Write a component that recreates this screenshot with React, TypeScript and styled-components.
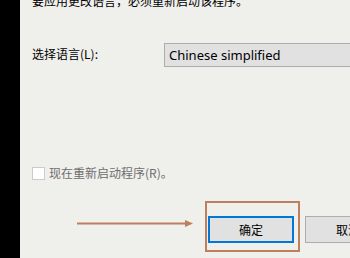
import styled, { createGlobalStyle } from "styled-components";

const GlobalStyle = createGlobalStyle`
  html, body {
    margin: 0;
    padding: 0;
    background: #efefec;
  }
`;

const CJK = `"Noto Sans CJK SC", "Noto Sans", sans-serif`;

function App() {
  return (
    <>
      <GlobalStyle />
      <Screen>
        <EdgeStrip />
        <Dialog>
          <Message>要应用更改语言，必须重新启动该程序。</Message>
          <LanguageRow>
            <FieldLabel>选择语言(L):</FieldLabel>
            <Dropdown>Chinese simplified</Dropdown>
          </LanguageRow>
          <RestartRow>
            <CheckBox />
            <DisabledText>现在重新启动程序(R)。</DisabledText>
          </RestartRow>
          <ButtonRow>
            <Arrow width="116" height="51" viewBox="0 0 116 51" aria-hidden>
              <line x1="0" y1="22.5" x2="110" y2="22.5" stroke="#bd7f5c" strokeWidth="2" />
              <polygon points="108,19 116,22.5 108,26" fill="#bd7f5c" />
            </Arrow>
            <Highlight>
              <DialogButton $focused>确定</DialogButton>
            </Highlight>
            <DialogButton>取消</DialogButton>
          </ButtonRow>
        </Dialog>
      </Screen>
    </>
  );
}

const Screen = styled.div`
  width: 350px;
  height: 258px;
  display: flex;
  overflow: hidden;
  background: #efefec;
`;

const EdgeStrip = styled.div`
  width: 20px;
  flex-shrink: 0;
  background: #000;
`;

const Dialog = styled.div`
  flex: 1;
  display: flex;
  flex-direction: column;
  padding-left: 12px;
  font-family: ${CJK};
  font-size: 12px;
  line-height: 16px;
  color: #000;
  min-width: 0;
`;

const Message = styled.div`
  margin-top: -7px;
  white-space: nowrap;
`;

const LanguageRow = styled.div`
  display: flex;
  align-items: flex-start;
  margin-top: 34px;
`;

const FieldLabel = styled.div`
  width: 132px;
  flex-shrink: 0;
  padding-top: 3px;
`;

const Dropdown = styled.div`
  width: 220px;
  flex-shrink: 0;
  height: 24px;
  box-sizing: border-box;
  border: 1px solid #adadad;
  background: #e1e1e1;
  padding-left: 4px;
  font-family: "Noto Sans", sans-serif;
  font-size: 13px;
  line-height: 22px;
  white-space: nowrap;
`;

const RestartRow = styled.div`
  display: flex;
  align-items: center;
  gap: 4px;
  margin-top: 98px;
  height: 16px;
`;

const CheckBox = styled.div`
  width: 13px;
  height: 13px;
  box-sizing: border-box;
  border: 1px solid #cccccc;
  background: #fff;
`;

const DisabledText = styled.span`
  color: #6d6d6d;
`;

const ButtonRow = styled.div`
  display: flex;
  align-items: flex-start;
  margin-top: 20px;
  padding-left: 45px;
`;

const Arrow = styled.svg`
  flex-shrink: 0;
  display: block;
  margin-right: 12px;
`;

const Highlight = styled.div`
  flex-shrink: 0;
  border: 2px solid #bd7f5c;
  padding: 13px 4px 7px 1px;
`;

const DialogButton = styled.div<{ $focused?: boolean }>`
  flex-shrink: 0;
  width: 86px;
  height: 27px;
  box-sizing: border-box;
  display: flex;
  align-items: center;
  justify-content: center;
  background: #e1e1e1;
  border: ${({ $focused }) => ($focused ? "2px solid #0078d7" : "1px solid #adadad")};
  margin-top: ${({ $focused }) => ($focused ? "0" : "15px")};
  margin-left: ${({ $focused }) => ($focused ? "0" : "5px")};
`;

export default App;
